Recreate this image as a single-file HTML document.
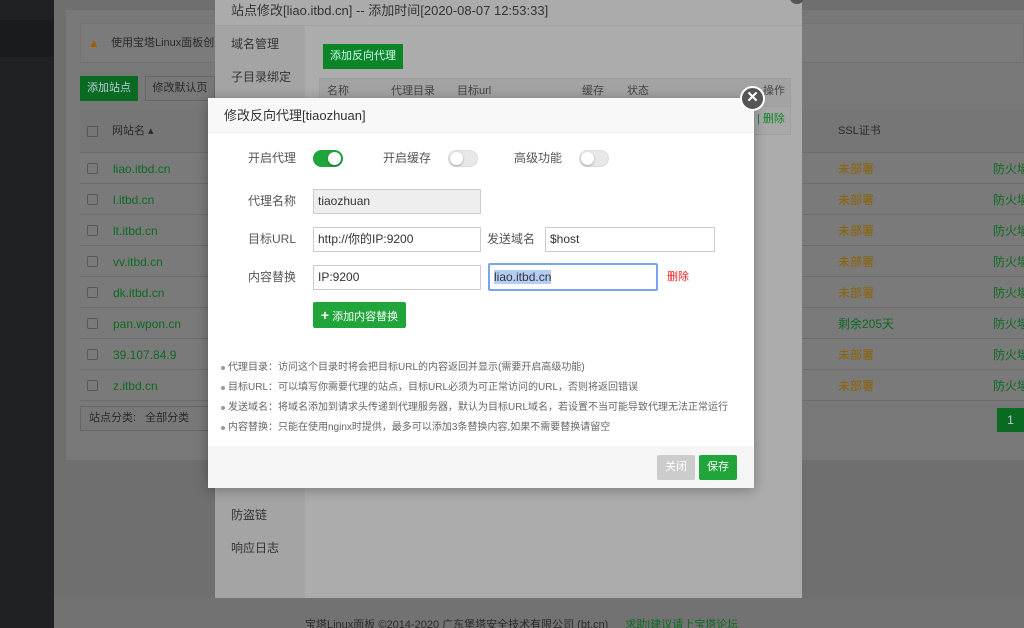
<!DOCTYPE html>
<html><head><meta charset="utf-8"><style>
*{box-sizing:border-box;margin:0;padding:0}
html,body{width:1024px;height:628px;overflow:hidden}
body{background:#6f6f6f;font-family:"Liberation Sans","Noto Sans CJK SC",sans-serif;font-size:12px;color:#333;position:relative;line-height:1.2}
.a{position:absolute;white-space:nowrap}
.side{left:0;top:0;width:54px;height:628px;background:#1f2225}
.side2{left:0;top:20px;width:54px;height:37px;background:#191b1e}
.card{left:66px;top:10px;width:958px;height:450px;background:#787878}
.g{color:#0c6a22}.o{color:#8e6200}
.row{left:80px;width:944px;height:31px;border-bottom:1px solid #6c6c6c;background:#7a7a7a}
.cb{position:absolute;left:7px;top:10px;width:11px;height:11px;border:1px solid #575757;border-radius:2px}
.outer{left:215px;top:0;width:587px;height:598px;background:#acacac}
.onav{left:215px;top:26px;width:90px;height:572px;background:#a4a4a4}
.inner{left:208px;top:98px;width:546px;height:390px;background:#fff;box-shadow:0 2px 12px rgba(0,0,0,.3)}
.lbl{position:absolute;font-size:12px;color:#555;text-align:right;width:70px;line-height:25px;white-space:nowrap}
.inp{position:absolute;height:25px;border:1px solid #ccc;font-size:12px;padding:0 4px;line-height:23px;color:#333}
.tg{position:absolute;width:30px;height:17px;border-radius:9px;background:#e8e8e8;border:1px solid #ddd}
.tg i{position:absolute;top:1px;left:1px;width:13px;height:13px;border-radius:50%;background:#fff;box-shadow:0 1px 2px rgba(0,0,0,.3)}
.tg.on{background:#20a53a;border-color:#20a53a}.tg.on i{left:14px}
.tip{position:absolute;left:20px;font-size:10px;color:#666;white-space:nowrap;line-height:14px}
.tip:before{content:"";position:absolute;left:-7px;top:5px;width:4px;height:4px;border-radius:50%;background:#999}
</style></head><body>
<div class="a side"></div><div class="a side2"></div>
<div class="a card"></div>
<div class="a" style="left:80px;top:23px;width:944px;height:40px;background:#7b7b7b;border:1px solid #737373"></div>
<div class="a" style="left:88px;top:36px;color:#a55a00;font-size:12px">▲</div>
<div class="a" style="left:111px;top:37px;font-size:11px;color:#2a2a2a">使用宝塔Linux面板创建</div>
<div class="a" style="left:80px;top:76px;width:58px;height:25px;background:#0b6a21;color:#bcd;font-size:11px;line-height:25px;text-align:center">添加站点</div>
<div class="a" style="left:145px;top:76px;width:70px;height:25px;border:1px solid #666;color:#2a2a2a;font-size:11px;line-height:23px;text-align:center">修改默认页</div>
<div class="a" style="left:80px;top:110px;width:944px;height:43px;background:#767676;border-bottom:1px solid #6c6c6c"></div>
<div class="a" style="left:87px;top:126px;width:11px;height:11px;border:1px solid #575757"></div>
<div class="a" style="left:112px;top:125px;font-size:11px;color:#2a2a2a">网站名 ▴</div>
<div class="a" style="left:838px;top:125px;font-size:11px;color:#2a2a2a">SSL证书</div>
<div class="a row" style="top:153px"><span class="cb"></span><span class="a g" style="left:33px;top:9px">liao.itbd.cn</span><span class="a o" style="left:758px;top:9px">未部署</span><span class="a g" style="left:913px;top:9px">防火墙</span></div>
<div class="a row" style="top:184px"><span class="cb"></span><span class="a g" style="left:33px;top:9px">l.itbd.cn</span><span class="a o" style="left:758px;top:9px">未部署</span><span class="a g" style="left:913px;top:9px">防火墙</span></div>
<div class="a row" style="top:215px"><span class="cb"></span><span class="a g" style="left:33px;top:9px">lt.itbd.cn</span><span class="a o" style="left:758px;top:9px">未部署</span><span class="a g" style="left:913px;top:9px">防火墙</span></div>
<div class="a row" style="top:246px"><span class="cb"></span><span class="a g" style="left:33px;top:9px">vv.itbd.cn</span><span class="a o" style="left:758px;top:9px">未部署</span><span class="a g" style="left:913px;top:9px">防火墙</span></div>
<div class="a row" style="top:277px"><span class="cb"></span><span class="a g" style="left:33px;top:9px">dk.itbd.cn</span><span class="a o" style="left:758px;top:9px">未部署</span><span class="a g" style="left:913px;top:9px">防火墙</span></div>
<div class="a row" style="top:308px"><span class="cb"></span><span class="a g" style="left:33px;top:9px">pan.wpon.cn</span><span class="a g" style="left:758px;top:9px">剩余205天</span><span class="a g" style="left:913px;top:9px">防火墙</span></div>
<div class="a row" style="top:339px"><span class="cb"></span><span class="a g" style="left:33px;top:9px">39.107.84.9</span><span class="a o" style="left:758px;top:9px">未部署</span><span class="a g" style="left:913px;top:9px">防火墙</span></div>
<div class="a row" style="top:370px"><span class="cb"></span><span class="a g" style="left:33px;top:9px">z.itbd.cn</span><span class="a o" style="left:758px;top:9px">未部署</span><span class="a g" style="left:913px;top:9px">防火墙</span></div>
<div class="a" style="left:80px;top:406px;width:140px;height:25px;border:1px solid #666;font-size:11px;color:#2a2a2a;line-height:23px;padding-left:8px">站点分类: <span style="margin-left:6px">全部分类</span></div>
<div class="a" style="left:997px;top:408px;width:27px;height:24px;background:#0b6a21;color:#bcd;text-align:center;line-height:24px">1</div>
<div class="a" style="left:54px;top:598px;width:970px;height:30px;background:#727272"></div>
<div class="a" style="left:305px;top:619px;font-size:11px;color:#2a2a2a">宝塔Linux面板 ©2014-2020 广东堡塔安全技术有限公司 (bt.cn) <span class="g" style="margin-left:14px">求助|建议请上宝塔论坛</span></div>

<div class="a outer"></div>
<div class="a" style="left:215px;top:0;width:587px;height:26px;border-bottom:1px solid #a0a0a0;background:#ababab"></div>
<div class="a" style="left:231px;top:3px;font-size:13px;color:#333">站点修改[liao.itbd.cn] -- 添加时间[2020-08-07 12:53:33]</div>
<div class="a" style="left:790px;top:-8px;width:14px;height:12px;border-radius:50%;background:#555"></div>
<div class="a onav"></div>
<div class="a" style="left:231px;top:37px;color:#333">域名管理</div>
<div class="a" style="left:231px;top:70px;color:#333">子目录绑定</div>
<div class="a" style="left:231px;top:508px;color:#333">防盗链</div>
<div class="a" style="left:231px;top:541px;color:#333">响应日志</div>
<div class="a" style="left:323px;top:44px;width:80px;height:25px;background:#0c8428;color:#cfe;font-size:11px;line-height:25px;text-align:center">添加反向代理</div>
<div class="a" style="left:319px;top:78px;width:472px;height:57px;border:1px solid #9f9f9f;background:#a8a8a8"></div>
<div class="a" style="left:319px;top:78px;width:472px;height:29px;background:#a3a3a3;border:1px solid #9f9f9f"></div>
<div class="a" style="left:327px;top:85px;font-size:11px;color:#444">名称</div>
<div class="a" style="left:391px;top:85px;font-size:11px;color:#444">代理目录</div>
<div class="a" style="left:457px;top:85px;font-size:11px;color:#444">目标url</div>
<div class="a" style="left:582px;top:85px;font-size:11px;color:#444">缓存</div>
<div class="a" style="left:627px;top:85px;font-size:11px;color:#444">状态</div>
<div class="a" style="left:763px;top:85px;font-size:11px;color:#444">操作</div>
<div class="a" style="left:757px;top:113px;font-size:11px;color:#0c8428">| 删除</div>

<div class="a inner">
 <div class="a" style="left:0;top:0;width:546px;height:35px;background:#f8f8f8;border-bottom:1px solid #eee"></div>
 <div class="a" style="left:16px;top:10px;font-size:13px;color:#333">修改反向代理[tiaozhuan]</div>
 <div class="lbl" style="left:18px;top:48px">开启代理</div><div class="tg on" style="left:105px;top:52px"><i></i></div>
 <div class="lbl" style="left:153px;top:48px">开启缓存</div><div class="tg" style="left:240px;top:52px"><i></i></div>
 <div class="lbl" style="left:284px;top:48px">高级功能</div><div class="tg" style="left:371px;top:52px"><i></i></div>
 <div class="lbl" style="left:18px;top:91px">代理名称</div><div class="inp" style="left:105px;top:91px;width:168px;background:#eee">tiaozhuan</div>
 <div class="lbl" style="left:18px;top:129px">目标URL</div><div class="inp" style="left:105px;top:129px;width:168px">http://你的IP:9200</div>
 <div class="lbl" style="left:257px;top:129px">发送域名</div><div class="inp" style="left:337px;top:129px;width:170px">$host</div>
 <div class="lbl" style="left:18px;top:167px">内容替换</div><div class="inp" style="left:105px;top:167px;width:168px">IP:9200</div>
 <div class="inp" style="left:280px;top:165px;width:170px;height:28px;border:2px solid #7ba4f0;border-radius:2px;line-height:24px"><span style="background:#b4cdf5">liao.itbd.cn</span></div>
 <div class="a" style="left:459px;top:173px;font-size:11px;color:#e22">删除</div>
 <div class="a" style="left:105px;top:204px;width:93px;height:26px;background:#20a53a;color:#fff;font-size:11px;line-height:26px;text-align:center;border-radius:2px"><b style="font-size:14px">+</b> 添加内容替换</div>
 <div class="tip" style="top:263px">代理目录：访问这个目录时将会把目标URL的内容返回并显示(需要开启高级功能)</div>
 <div class="tip" style="top:283px">目标URL：可以填写你需要代理的站点，目标URL必须为可正常访问的URL，否则将返回错误</div>
 <div class="tip" style="top:303px">发送域名：将域名添加到请求头传递到代理服务器，默认为目标URL域名，若设置不当可能导致代理无法正常运行</div>
 <div class="tip" style="top:323px">内容替换：只能在使用nginx时提供，最多可以添加3条替换内容,如果不需要替换请留空</div>
 <div class="a" style="left:0;top:348px;width:546px;height:42px;background:#f5f5f5"></div>
 <div class="a" style="left:449px;top:357px;width:38px;height:25px;background:#ccc;color:#fff;font-size:11px;line-height:25px;text-align:center;border-radius:2px">关闭</div>
 <div class="a" style="left:491px;top:357px;width:38px;height:25px;background:#20a53a;color:#fff;font-size:11px;line-height:25px;text-align:center;border-radius:2px">保存</div>
</div>
<div class="a" style="left:740px;top:86px;width:25px;height:25px;border-radius:50%;background:#555;border:2px solid #fff;color:#fff;text-align:center;line-height:20px;font-size:15px;font-weight:bold">✕</div>
</body></html>
